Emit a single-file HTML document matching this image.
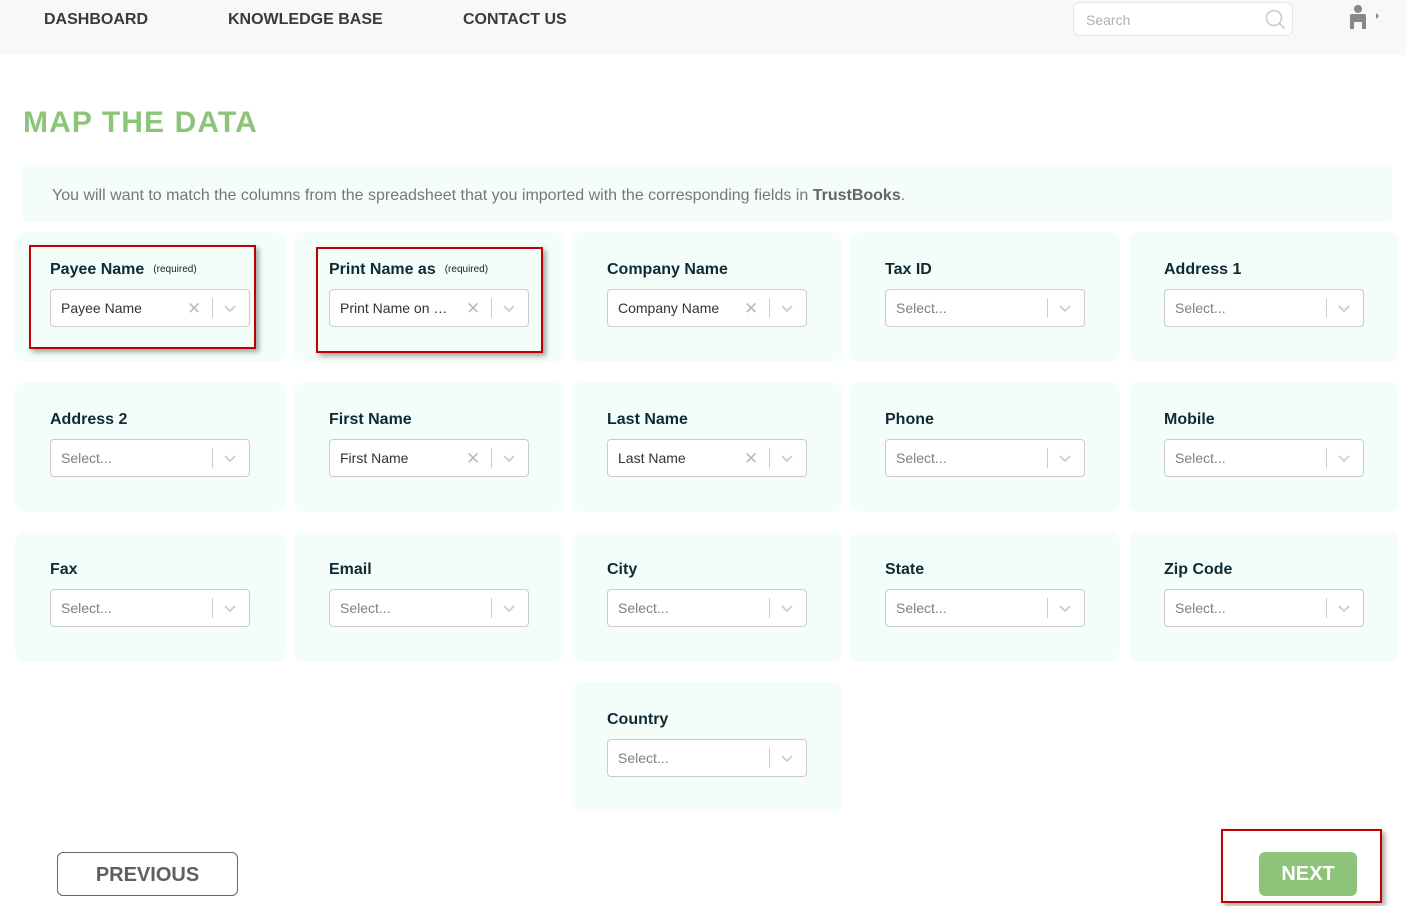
<!DOCTYPE html>
<html><head><meta charset="utf-8"><style>
*{box-sizing:border-box;margin:0;padding:0}
body{width:1406px;height:906px;background:#fff;font-family:"Liberation Sans",Arial,sans-serif;position:relative;overflow:hidden}
.hdr{position:absolute;left:0;top:0;width:1406px;height:55px;background:#f8f8f8}
.nav{position:absolute;top:11px;font-size:16px;font-weight:bold;color:#3a3a3a;letter-spacing:0}
.search{position:absolute;left:1073px;top:2px;width:220px;height:34px;border:1px solid #e6e6e6;border-radius:7px;background:#fff}
.search span{position:absolute;left:12px;top:9px;font-size:14px;color:#b0b0b0}
h1{position:absolute;left:23px;top:106px;font-size:30px;font-weight:900;color:#8dc47a;letter-spacing:1.1px}
.info{position:absolute;left:22px;top:165px;width:1370px;height:57px;background:#f4fdf9;border-radius:6px}
.info p{position:absolute;left:30px;top:22px;font-size:16px;color:#777}
.info b{color:#666}
.card{position:absolute;width:270px;height:130px;background:#f3fdf9;border-radius:10px}
.lbl{position:absolute;left:35px;top:29px;font-size:16px;font-weight:bold;color:#0f2a35;white-space:nowrap}
.lbl small{font-size:10px;font-weight:normal;color:#222;margin-left:9px;vertical-align:2px}
.sel{position:absolute;left:35px;top:57px;width:200px;height:38px;border:1px solid #ccc;border-radius:4px;background:#fff}
.sel .t{position:absolute;left:10px;top:10px;font-size:14px;color:#333;white-space:nowrap}
.sel .t.p{color:#808080}
.sel .x{position:absolute;left:136px;top:9px;font-size:17px;color:#bbb}
.sel .bar{position:absolute;left:161px;top:8px;width:1px;height:20px;background:#ccc}
.sel svg{position:absolute;left:172px;top:14px}
.red{position:absolute;border:2px solid #c00000;box-shadow:3px 3px 5px rgba(0,0,0,.35)}
.prev{position:absolute;left:57px;top:852px;width:181px;height:44px;border:1px solid #666;border-radius:6px;font-size:20px;font-weight:bold;color:#5f5f5f;text-align:center;line-height:44px}
.next{position:absolute;left:1259px;top:852px;width:98px;height:44px;background:#8dc47a;border-radius:6px;font-size:20px;font-weight:bold;color:#fff;text-align:center;line-height:45px}
</style></head><body>
<div class="hdr">
<div class="nav" style="left:44px">DASHBOARD</div>
<div class="nav" style="left:228px">KNOWLEDGE BASE</div>
<div class="nav" style="left:463px">CONTACT US</div>
<div class="search"><span>Search</span>
<svg style="position:absolute;left:191px;top:6px" width="22" height="22" viewBox="0 0 22 22"><circle cx="9" cy="9" r="7.5" fill="none" stroke="#c8c8c8" stroke-width="1.5"/><line x1="14.5" y1="14.5" x2="20" y2="20" stroke="#c8c8c8" stroke-width="1.5"/></svg></div>
<svg style="position:absolute;left:1348px;top:4px" width="36" height="26" viewBox="0 0 36 26"><circle cx="10" cy="5" r="4" fill="#888"/><path d="M2 12 Q2 10 4 10 H16 Q18 10 18 12 V25 H14 V18 H6 V25 H2Z" fill="#888"/><path d="M28 9 L31 12 L28 15Z" fill="#888"/></svg>
</div>
<h1>MAP THE DATA</h1>
<div class="info"><p>You will want to match the columns from the spreadsheet that you imported with the corresponding fields in <b>TrustBooks</b>.</p></div>

<div class="card" style="left:15px;top:232px"><div class="lbl">Payee Name<small>(required)</small></div><div class="sel"><span class="t">Payee Name</span><span class="x">✕</span><span class="bar"></span><svg width="14" height="10"><path d="M2 2 L7 7 L12 2" fill="none" stroke="#ccc" stroke-width="1.8"/></svg></div></div>
<div class="card" style="left:294px;top:232px"><div class="lbl">Print Name as<small>(required)</small></div><div class="sel"><span class="t">Print Name on …</span><span class="x">✕</span><span class="bar"></span><svg width="14" height="10"><path d="M2 2 L7 7 L12 2" fill="none" stroke="#ccc" stroke-width="1.8"/></svg></div></div>
<div class="card" style="left:572px;top:232px"><div class="lbl">Company Name</div><div class="sel"><span class="t">Company Name</span><span class="x">✕</span><span class="bar"></span><svg width="14" height="10"><path d="M2 2 L7 7 L12 2" fill="none" stroke="#ccc" stroke-width="1.8"/></svg></div></div>
<div class="card" style="left:850px;top:232px"><div class="lbl">Tax ID</div><div class="sel"><span class="t p">Select...</span><span class="bar"></span><svg width="14" height="10"><path d="M2 2 L7 7 L12 2" fill="none" stroke="#ccc" stroke-width="1.8"/></svg></div></div>
<div class="card" style="left:1129px;top:232px"><div class="lbl">Address 1</div><div class="sel"><span class="t p">Select...</span><span class="bar"></span><svg width="14" height="10"><path d="M2 2 L7 7 L12 2" fill="none" stroke="#ccc" stroke-width="1.8"/></svg></div></div>

<div class="card" style="left:15px;top:382px"><div class="lbl">Address 2</div><div class="sel"><span class="t p">Select...</span><span class="bar"></span><svg width="14" height="10"><path d="M2 2 L7 7 L12 2" fill="none" stroke="#ccc" stroke-width="1.8"/></svg></div></div>
<div class="card" style="left:294px;top:382px"><div class="lbl">First Name</div><div class="sel"><span class="t">First Name</span><span class="x">✕</span><span class="bar"></span><svg width="14" height="10"><path d="M2 2 L7 7 L12 2" fill="none" stroke="#ccc" stroke-width="1.8"/></svg></div></div>
<div class="card" style="left:572px;top:382px"><div class="lbl">Last Name</div><div class="sel"><span class="t">Last Name</span><span class="x">✕</span><span class="bar"></span><svg width="14" height="10"><path d="M2 2 L7 7 L12 2" fill="none" stroke="#ccc" stroke-width="1.8"/></svg></div></div>
<div class="card" style="left:850px;top:382px"><div class="lbl">Phone</div><div class="sel"><span class="t p">Select...</span><span class="bar"></span><svg width="14" height="10"><path d="M2 2 L7 7 L12 2" fill="none" stroke="#ccc" stroke-width="1.8"/></svg></div></div>
<div class="card" style="left:1129px;top:382px"><div class="lbl">Mobile</div><div class="sel"><span class="t p">Select...</span><span class="bar"></span><svg width="14" height="10"><path d="M2 2 L7 7 L12 2" fill="none" stroke="#ccc" stroke-width="1.8"/></svg></div></div>

<div class="card" style="left:15px;top:532px"><div class="lbl">Fax</div><div class="sel"><span class="t p">Select...</span><span class="bar"></span><svg width="14" height="10"><path d="M2 2 L7 7 L12 2" fill="none" stroke="#ccc" stroke-width="1.8"/></svg></div></div>
<div class="card" style="left:294px;top:532px"><div class="lbl">Email</div><div class="sel"><span class="t p">Select...</span><span class="bar"></span><svg width="14" height="10"><path d="M2 2 L7 7 L12 2" fill="none" stroke="#ccc" stroke-width="1.8"/></svg></div></div>
<div class="card" style="left:572px;top:532px"><div class="lbl">City</div><div class="sel"><span class="t p">Select...</span><span class="bar"></span><svg width="14" height="10"><path d="M2 2 L7 7 L12 2" fill="none" stroke="#ccc" stroke-width="1.8"/></svg></div></div>
<div class="card" style="left:850px;top:532px"><div class="lbl">State</div><div class="sel"><span class="t p">Select...</span><span class="bar"></span><svg width="14" height="10"><path d="M2 2 L7 7 L12 2" fill="none" stroke="#ccc" stroke-width="1.8"/></svg></div></div>
<div class="card" style="left:1129px;top:532px"><div class="lbl">Zip Code</div><div class="sel"><span class="t p">Select...</span><span class="bar"></span><svg width="14" height="10"><path d="M2 2 L7 7 L12 2" fill="none" stroke="#ccc" stroke-width="1.8"/></svg></div></div>

<div class="card" style="left:572px;top:682px"><div class="lbl">Country</div><div class="sel"><span class="t p">Select...</span><span class="bar"></span><svg width="14" height="10"><path d="M2 2 L7 7 L12 2" fill="none" stroke="#ccc" stroke-width="1.8"/></svg></div></div>

<div class="red" style="left:29px;top:245px;width:227px;height:104px"></div>
<div class="red" style="left:316px;top:247px;width:227px;height:106px"></div>

<div class="prev">PREVIOUS</div>
<div class="next">NEXT</div>
<div class="red" style="left:1221px;top:829px;width:161px;height:74px"></div>
</body></html>
